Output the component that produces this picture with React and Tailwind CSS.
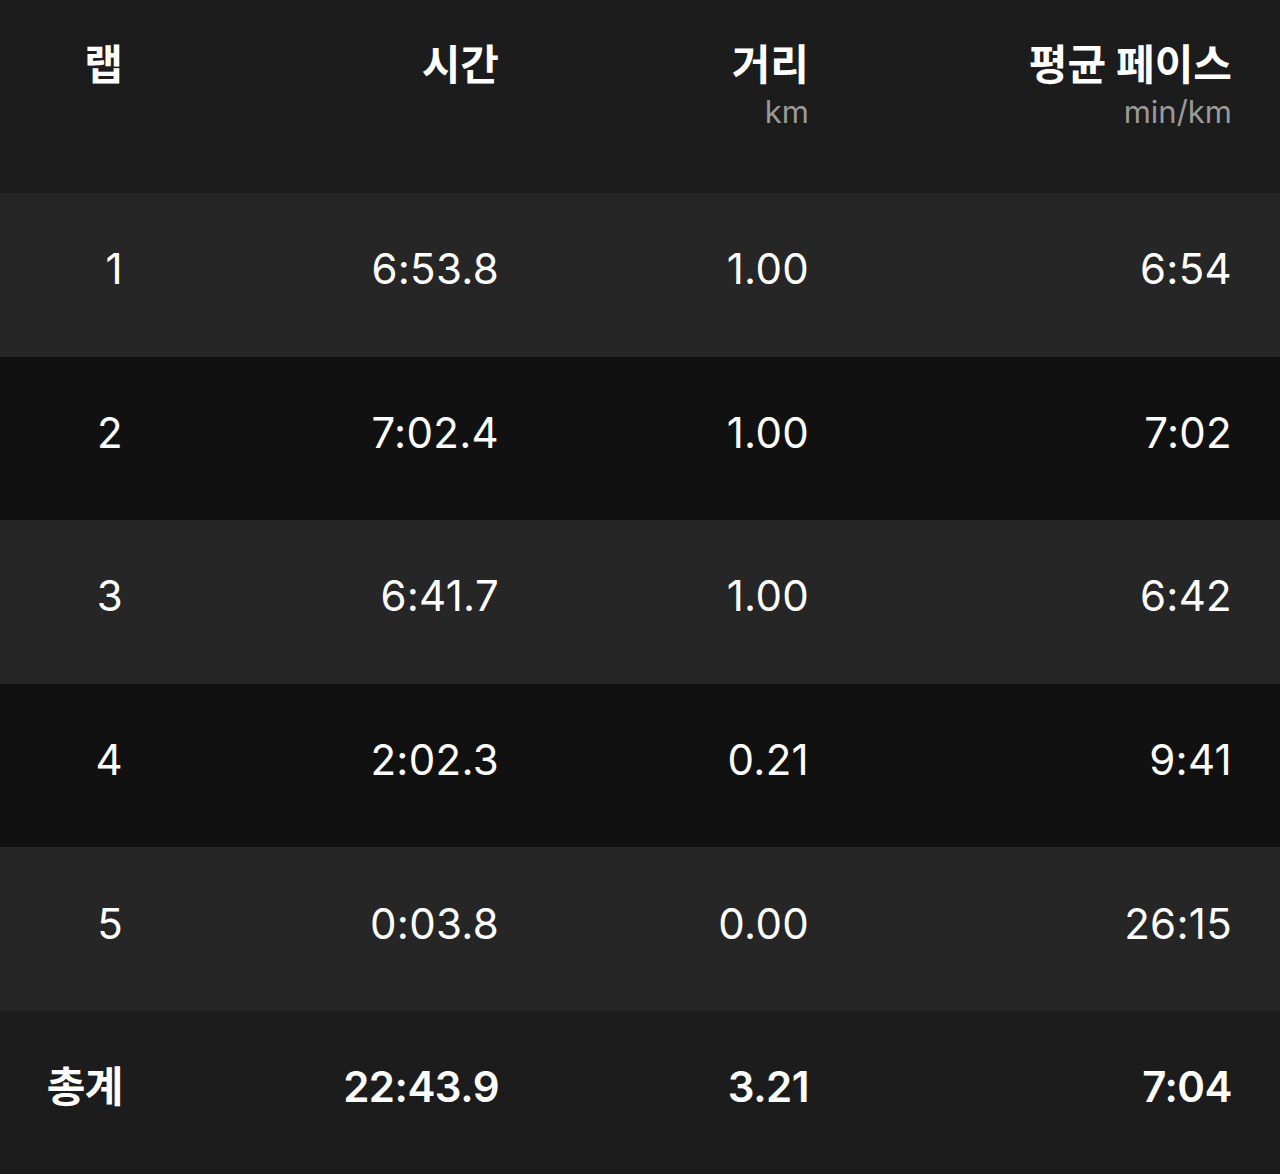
import React from "react";

const laps = [
  { lap: "1", time: "6:53.8", dist: "1.00", pace: "6:54" },
  { lap: "2", time: "7:02.4", dist: "1.00", pace: "7:02" },
  { lap: "3", time: "6:41.7", dist: "1.00", pace: "6:42" },
  { lap: "4", time: "2:02.3", dist: "0.21", pace: "9:41" },
  { lap: "5", time: "0:03.8", dist: "0.00", pace: "26:15" },
];

const font = { fontFamily: 'Inter, "Noto Sans CJK KR", sans-serif' };

function Row({ cells, className, bold }) {
  return (
    <div className={`flex items-center pb-3 text-[42px] text-white ${bold ? "font-semibold tracking-[-0.5px]" : "font-normal tracking-[0.3px]"} ${className}`}>
      <div className="w-[123px] text-right">{cells[0]}</div>
      <div className="w-[376px] text-right">{cells[1]}</div>
      <div className="w-[310px] text-right">{cells[2]}</div>
      <div className="flex-1 pr-[48px] text-right">{cells[3]}</div>
    </div>
  );
}

export default function App() {
  return (
    <div className="w-[1280px] h-[1174px] bg-[#1c1c1c] flex flex-col" style={font}>
      <div className="h-[193px] flex items-start pt-[38px] text-white">
        <div className="w-[123px] text-right text-[42px] font-bold leading-[54px]">랩</div>
        <div className="w-[376px] text-right text-[42px] font-bold leading-[54px]">시간</div>
        <div className="w-[310px] flex flex-col items-end">
          <div className="text-[42px] font-bold leading-[54px]">거리</div>
          <div className="text-[31px] text-[#9a9a9a] leading-[36px] mt-[2px]">km</div>
        </div>
        <div className="flex-1 pr-[48px] flex flex-col items-end">
          <div className="text-[42px] font-bold leading-[54px]">평균 페이스</div>
          <div className="text-[31px] text-[#9a9a9a] leading-[36px] mt-[2px]">min/km</div>
        </div>
      </div>
      {laps.map((l, i) => (
        <Row
          key={l.lap}
          cells={[l.lap, l.time, l.dist, l.pace]}
          className={`h-[163.6px] ${i % 2 === 0 ? "bg-[#262626]" : "bg-[#111111]"}`}
        />
      ))}
      <Row cells={["총계", "22:43.9", "3.21", "7:04"]} className="flex-1 bg-[#1c1c1c]" bold />
    </div>
  );
}
